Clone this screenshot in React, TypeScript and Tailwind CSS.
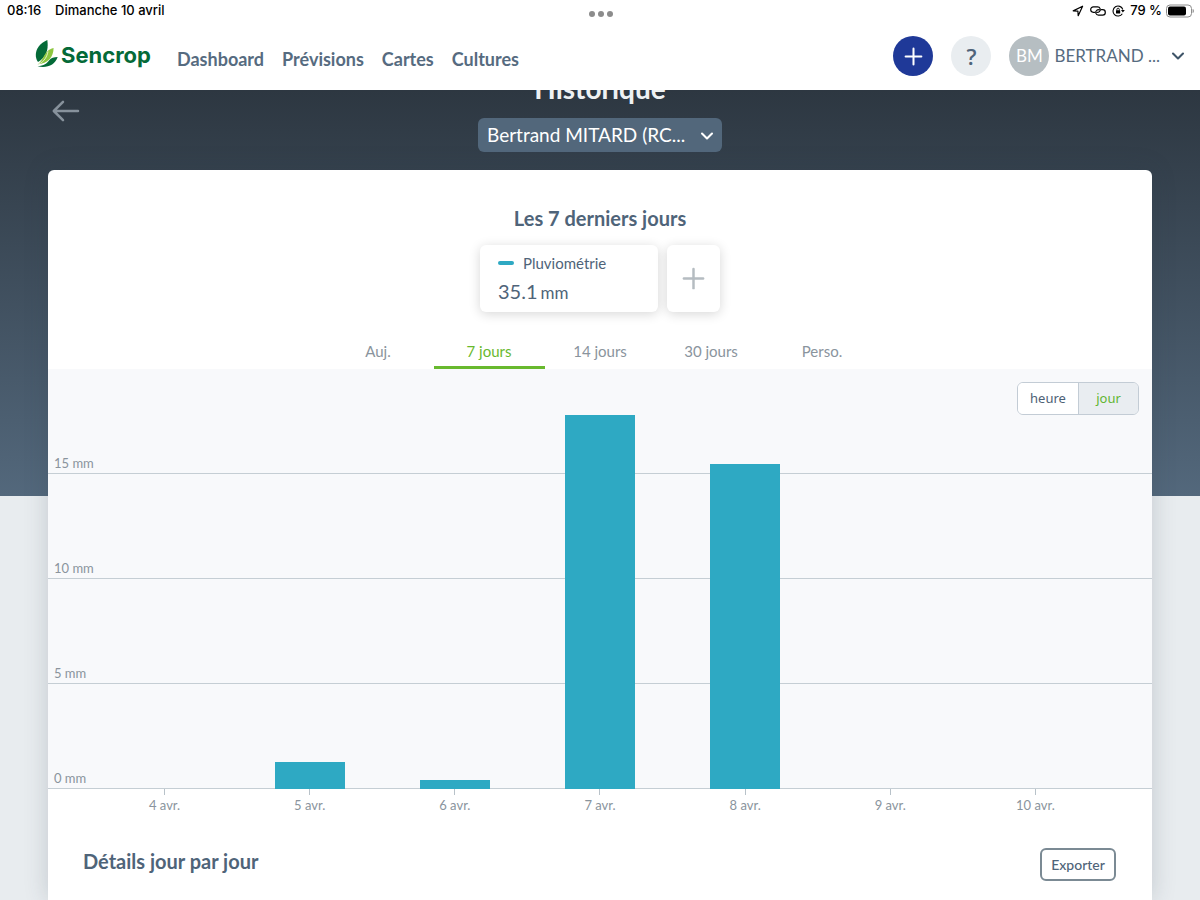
import { useState } from "react";
import { ChevronDown, Plus } from "lucide-react";

const SCALE_MAX = 20;

const rainfall = [
  { day: "4 avr.", value: 0 },
  { day: "5 avr.", value: 1.3 },
  { day: "6 avr.", value: 0.45 },
  { day: "7 avr.", value: 17.8 },
  { day: "8 avr.", value: 15.5 },
  { day: "9 avr.", value: 0 },
  { day: "10 avr.", value: 0 },
];

const gridSteps = [15, 10, 5, 0];
const periods = ["Auj.", "7 jours", "14 jours", "30 jours", "Perso."];
const links = ["Dashboard", "Prévisions", "Cartes", "Cultures"];

const StatusBar = () => (
  <div className="flex h-[22px] items-center justify-between pr-[6px] pl-[7px] font-['Inter',sans-serif] text-[13px] font-medium text-black">
    <div className="flex flex-1 gap-3.5">
      <span>08:16</span>
      <span>Dimanche 10 avril</span>
    </div>
    <div className="flex gap-[3px] pt-[6px]">
      <span className="size-[6px] rounded-full bg-[#8c8c8c]" />
      <span className="size-[6px] rounded-full bg-[#8c8c8c]" />
      <span className="size-[6px] rounded-full bg-[#8c8c8c]" />
    </div>
    <div className="flex flex-1 items-center justify-end">
      <svg width="12" height="12" viewBox="0 0 12 12" fill="none" stroke="black" strokeWidth="1.2" strokeLinejoin="round" className="mr-1.5">
        <path d="M1.2 5.9 10.6 1.2 6.2 10.7 5.9 6.1Z" />
      </svg>
      <svg width="16" height="12" viewBox="0 0 16 12" fill="none" stroke="black" strokeWidth="1.2" strokeLinecap="round" className="mr-1.5">
        <path d="M4.6 7.3H3.4a2.7 2.7 0 0 1 0-5.4h4.2a2.7 2.7 0 0 1 1.8 4.7c-.7.7-1.7.7-2.6.7" />
        <path d="M11.4 4.7h1.2a2.7 2.7 0 0 1 0 5.4H8.4a2.7 2.7 0 0 1-1.8-4.7c.7-.7 1.7-.7 2.6-.7" />
      </svg>
      <svg width="13" height="12" viewBox="0 0 13 12" fill="none" stroke="black" strokeWidth="1.1" className="mr-[5px]">
        <path d="M10.8 4.5A5 5 0 1 0 10.3 8.7" />
        <path d="M9 5h3.8L10.9 7.6Z" fill="black" stroke="none" />
        <path d="M4.9 5.6V4.4a1.2 1.2 0 0 1 2.4 0v1.2" strokeWidth="0.9" />
        <rect x="4" y="5.2" width="4.2" height="3.3" rx="0.5" fill="black" stroke="none" />
      </svg>
      <span>79 %</span>
      <svg width="28" height="14" viewBox="0 0 28 14" className="ml-1">
        <rect x="0.5" y="1" width="25" height="12" rx="3.5" fill="none" stroke="#8c8c8c" />
        <rect x="2" y="2.5" width="18" height="9" rx="2" fill="black" />
        <path d="M26.6 5v4c1-.4 1.3-1.2 1.3-2s-.3-1.6-1.3-2Z" fill="#8c8c8c" />
      </svg>
    </div>
  </div>
);

const Logo = () => (
  <a href="#" className="flex items-start gap-[3px]">
    <svg width="23" height="29" viewBox="0 0 23 29">
      <path d="M3 23C-1.5 17 .5 6 12.3 1 13.8 11 11 18 3 23Z" fill="#046a38" />
      <path d="M2.5 25.5C9 22 8.500 11 18.6 9 18.5 18 13 24.5 2.5 25.5Z" fill="#8dc63f" />
      <path d="M3.5 25.2C9.5 22.5 12 17.5 13 12.5" fill="none" stroke="white" strokeWidth="0.7" />
      <path d="M2.5 27.3C9 26.8 12 24.5 14 21.5 16 18.8 19 18 22.7 18 20 26 12 29.5 2.5 27.3Z" fill="#046a38" />
    </svg>
    <span className="pt-[2px] font-['Inter',sans-serif] text-[22px] leading-7 font-bold text-[#046a38]">
      Sencrop
    </span>
  </a>
);

const Header = () => (
  <header className="relative z-10 bg-white">
    <StatusBar />
    <div className="flex h-[68px] items-center pr-3 pl-[35px]">
      <div className="w-[142px] pb-1">
        <Logo />
      </div>
      <nav className="flex flex-1 gap-[18px] pt-[6px] text-[18px] font-bold text-[#566b80]">
        {links.map((link) => (
          <a key={link} href="#">
            {link}
          </a>
        ))}
      </nav>
      <div className="flex items-center">
        <button aria-label="Ajouter" className="flex size-10 items-center justify-center rounded-full bg-[#1f3998] text-white">
          <Plus size={27} strokeWidth={1.8} />
        </button>
        <button aria-label="Aide" className="ml-[18px] size-10 rounded-full bg-[#e9edf0] font-['Open_Sans',sans-serif] text-[22px] font-semibold text-[#50647a]">
          ?
        </button>
        <button className="ml-[18px] flex items-center text-[17px] text-[#566b80]">
          <span className="flex size-10 items-center justify-center rounded-full bg-[#b6bec2] text-white">
            BM
          </span>
          <span className="pl-[5px]">BERTRAND ...</span>
          <ChevronDown size={20} strokeWidth={2.5} className="ml-2 text-[#3e5468]" />
        </button>
      </div>
    </div>
  </header>
);

const RainChart = () => {
  const [unit, setUnit] = useState("jour");

  return (
    <section>
      <div className="relative h-[420px] bg-[#f8f9fb]">
        {gridSteps.map((step) => (
          <div
            key={step}
            className="absolute inset-x-0 border-b border-[#c5ced4] pl-[6px] text-[13px] leading-5 text-[#8a949d]"
            style={{ bottom: `${(step / SCALE_MAX) * 100}%` }}
          >
            {step} mm
          </div>
        ))}
        <div className="relative grid h-full grid-cols-7 px-11">
          {rainfall.map(({ day, value }) => (
            <div key={day} className="flex items-end justify-center">
              <div
                className="w-[48%] bg-[#2ea9c3]"
                style={{ height: `${(value / SCALE_MAX) * 100}%` }}
              />
            </div>
          ))}
        </div>
        <div className="absolute top-[13px] right-[13px] flex h-[33px] overflow-hidden rounded-md border border-[#c3ccd5] font-['Noto_Sans',sans-serif] text-[13px]">
          {["heure", "jour"].map((name) => (
            <button
              key={name}
              onClick={() => setUnit(name)}
              className={
                unit === name
                  ? "w-[60px] border-l border-[#c3ccd5] bg-[#e9edf1] text-[#62b531]"
                  : "w-[60px] bg-white text-[#4d6175]"
              }
            >
              {name}
            </button>
          ))}
        </div>
      </div>
      <div className="grid grid-cols-7 px-11 text-center text-[13px] text-[#8a949d]">
        {rainfall.map(({ day }) => (
          <div key={day}>
            <div className="mx-auto h-[6px] w-px bg-[#b8c2c9]" />
            <div className="leading-5">{day}</div>
          </div>
        ))}
      </div>
    </section>
  );
};

const App = () => {
  const [period, setPeriod] = useState("7 jours");

  return (
    <div className="flex min-h-screen flex-col bg-[#e8ecef] font-['Lato',sans-serif] text-[#4f6479]">
      <Header />
      <main className="flex flex-1 flex-col bg-[linear-gradient(#2d3741,#53687c)] bg-[length:100%_406px] bg-no-repeat px-12">
        {/* Page title, partly scrolled under the header */}
        <div className="flex h-20 items-start px-1">
          <div className="flex-1 pt-[10px]">
            <button aria-label="Retour" className="block text-[#87929c]">
              <svg width="28" height="22" viewBox="0 0 28 22" fill="none" stroke="currentColor" strokeWidth="2.5" strokeLinecap="round" strokeLinejoin="round">
                <path d="M26 11H2M11 1.8 1.8 11 11 20.2" />
              </svg>
            </button>
          </div>
          <div className="-mt-5 flex flex-col items-center">
            <h1 className="text-[28px] leading-9 font-bold text-[#eef1f3]">Historique</h1>
            <div className="relative mt-3">
              <select
                aria-label="Station"
                className="h-[34px] w-[244px] appearance-none rounded-md bg-[#52677b] pr-9 pl-[9px] text-[19px] text-white"
              >
                <option>Bertrand MITARD (RC...</option>
              </select>
              <ChevronDown
                size={20}
                strokeWidth={2.5}
                className="pointer-events-none absolute top-2 right-[5px] text-white"
              />
            </div>
          </div>
          <div className="flex-1" />
        </div>

        <div className="flex-1 rounded-t-md bg-white shadow-[0_0_24px_rgba(45,60,75,0.2)]">
          <h2 className="pt-[34px] text-center text-[20px] leading-7 font-bold">
            Les 7 derniers jours
          </h2>
          <div className="mt-[13px] flex justify-center gap-[9px]">
            <div className="h-[67px] w-[178px] rounded-md bg-white px-[18px] pt-2 shadow-[0_2px_12px_rgba(0,0,0,0.16)]">
              <div className="flex items-center gap-[9px] text-[15px] leading-5">
                <span className="h-1 w-4 rounded-full bg-[#2ea9c3]" />
                Pluviométrie
              </div>
              <div className="mt-1 leading-7">
                <span className="text-[20px]">35.1</span>
                <span className="pl-[3px] text-[17px]">mm</span>
              </div>
            </div>
            <button
              aria-label="Ajouter une mesure"
              className="flex h-[67px] w-[53px] items-center justify-center rounded-md bg-white text-[#b5bcc1] shadow-[0_2px_12px_rgba(0,0,0,0.16)]"
            >
              <Plus size={33} strokeWidth={1.8} />
            </button>
          </div>

          <div className="mt-[25px] flex justify-center text-[15px]">
            {periods.map((name) => (
              <button
                key={name}
                onClick={() => setPeriod(name)}
                className={
                  period === name
                    ? "h-8 w-[111px] border-b-[3px] border-[#68b92e] text-[#68b92e]"
                    : "h-8 w-[111px] border-b-[3px] border-transparent text-[#8a949d]"
                }
              >
                {name}
              </button>
            ))}
          </div>

          <RainChart />

          <div className="flex items-start justify-between pt-8 pr-9 pb-[19px] pl-[35px]">
            <h2 className="text-[20px] leading-7 font-bold">Détails jour par jour</h2>
            <button className="mt-px h-[33px] w-[76px] rounded-md border-2 border-[#7b8a94] text-[14px] font-medium">
              Exporter
            </button>
          </div>
        </div>
      </main>
    </div>
  );
};

export default App;
